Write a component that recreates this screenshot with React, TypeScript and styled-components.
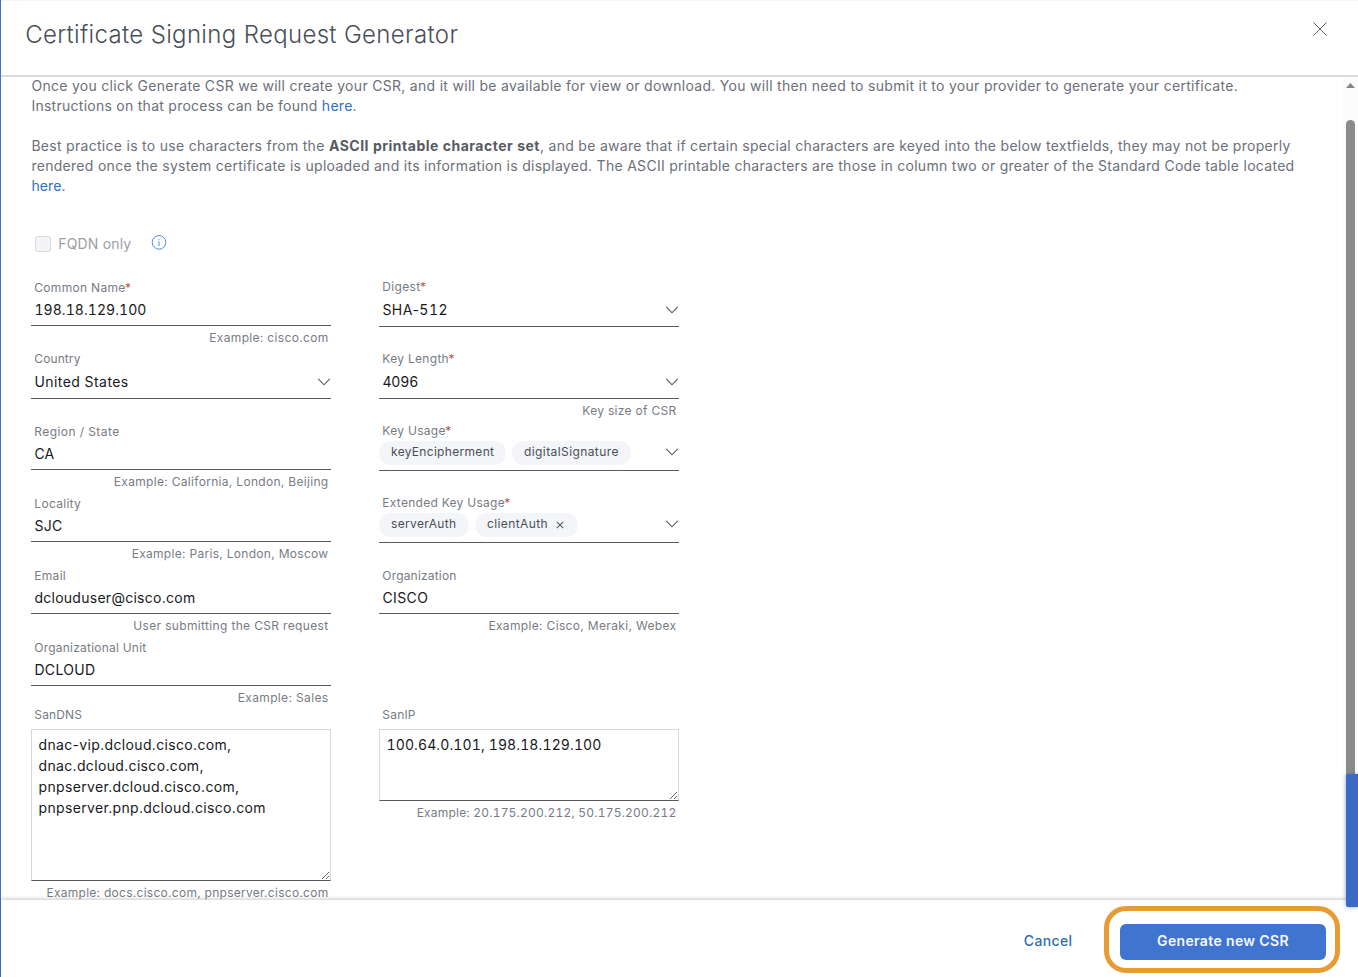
import React from "react";
import styled, { createGlobalStyle } from "styled-components";

const GlobalStyle = createGlobalStyle`
  * { box-sizing: border-box; }
  body {
    margin: 0;
    background: #fff;
    font-family: Inter, "Liberation Sans", sans-serif;
    font-size: 14px;
    letter-spacing: 0.3px;
    color: #6b7079;
    overflow: hidden;
  }
`;

const Modal = styled.div`
  position: relative;
  display: flex;
  flex-direction: column;
  width: 1358px;
  height: 977px;
  border-left: 1px solid #3a74d4;
  background: #fff;
`;

const Header = styled.header`
  display: flex;
  flex: none;
  justify-content: space-between;
  align-items: flex-start;
  height: 77px;
  padding: 20px 31px 0 24.2px;
  border-top: 1px solid #f5f5f6;
  border-bottom: 2px solid #dadbe0;
`;

const Title = styled.h1`
  margin: 0;
  font-size: 24px;
  line-height: 28px;
  font-weight: 300;
  letter-spacing: 0.335px;
  color: #4a4f57;
`;

const CloseButton = styled.button`
  display: flex;
  margin: 1px 0 0;
  padding: 0;
  border: 0;
  background: none;
`;

const Body = styled.div`
  display: flex;
  flex: 1;
  min-height: 0;
`;

const Content = styled.main`
  flex: 1;
  min-width: 0;
  margin-top: -1px;
  padding-left: 30px;
  overflow: hidden;
`;

const Paragraph = styled.p`
  margin: 0 0 20px;
  line-height: 20px;
`;

const Line = styled.span<{ $ls?: number }>`
  display: block;
  padding-left: 0.4px;
  white-space: nowrap;
  letter-spacing: ${(p) => p.$ls ?? 0.3}px;
`;

const Strong = styled.strong`
  font-weight: 700;
  letter-spacing: 0.51px;
  color: #565b63;
`;

const Link = styled.a`
  color: #2a6fd0;
`;

const CheckRow = styled.div`
  display: flex;
  align-items: center;
  height: 20px;
  margin: 37px 0 26px;
  padding-left: 4px;
`;

const CheckBox = styled.span`
  width: 16px;
  height: 16px;
  margin-top: 1px;
  border: 1px solid #d8dade;
  border-radius: 3px;
  background: #f3f4f6;
`;

const CheckLabel = styled.span`
  margin: 0 20px 0 7.3px;
  letter-spacing: 0.16px;
  color: #9a9ea5;
`;

const Form = styled.div`
  display: flex;
  gap: 48px;
`;

const Column = styled.div<{ $shift?: boolean }>`
  width: 300px;
  padding-top: ${(p) => (p.$shift ? 0 : 1)}px;
`;

const FieldBox = styled.div<{ $height: number }>`
  display: flex;
  flex-direction: column;
  height: ${(p) => p.$height}px;
`;

const Label = styled.label<{ $ls?: number }>`
  height: 16px;
  padding-left: 3.3px;
  font-size: 12px;
  line-height: 16px;
  letter-spacing: ${(p) => p.$ls ?? 0.3}px;
  color: #777c84;
`;

const Required = styled.span`
  margin-left: -0.6px;
  color: #b8584a;
`;

const Control = styled.div<{ $height: number }>`
  display: flex;
  flex: none;
  justify-content: space-between;
  height: ${(p) => p.$height}px;
  border-bottom: 1px solid #555a62;
`;

const Value = styled.span<{ $height: number; $ls?: number }>`
  padding-left: 3.4px;
  line-height: ${(p) => p.$height}px;
  letter-spacing: ${(p) => p.$ls ?? 0.3}px;
  color: #17191c;
`;

const Digits = styled.span`
  font-variant-numeric: tabular-nums;
`;

const Helper = styled.div<{ $ls?: number }>`
  padding: 4px 2.5px 0 0;
  text-align: right;
  font-size: 12px;
  line-height: 16px;
  white-space: nowrap;
  letter-spacing: ${(p) => p.$ls ?? 0.35}px;
  color: #777c84;
`;

const ChipRow = styled.div`
  display: flex;
  gap: 6px;
  margin-top: 2px;
`;

const Chip = styled.span<{ $width: number; $ls: number }>`
  display: flex;
  align-items: center;
  gap: 8px;
  width: ${(p) => p.$width}px;
  height: 24px;
  padding: 0 0 3px 12px;
  border-radius: 12px;
  background: #f3f5f8;
  font-size: 12px;
  letter-spacing: ${(p) => p.$ls}px;
  color: #4a4f57;

  svg {
    margin-top: 2px;
  }
`;

const TextBox = styled.div<{ $height: number; $ls?: number }>`
  flex: none;
  height: ${(p) => p.$height}px;
  margin-top: 6px;
  padding: 4px 6.5px;
  border: 1px solid #d6d8db;
  border-bottom-color: #555a62;
  overflow: hidden;
  resize: vertical;
  line-height: 21px;
  white-space: pre;
  letter-spacing: ${(p) => p.$ls ?? 0.34}px;
  color: #17191c;
`;

const ScrollBar = styled.div`
  display: flex;
  flex-direction: column;
  align-items: center;
  width: 15px;
  padding-top: 6px;
  background: #fcfcfc;
`;

const Thumb = styled.div`
  flex: 1;
  width: 9px;
  margin-top: 32px;
  border-radius: 5px 5px 0 0;
  background: #8b8b8b;
`;

const Footer = styled.footer`
  position: relative;
  display: flex;
  flex: none;
  justify-content: flex-end;
  align-items: center;
  height: 77px;
  padding: 3px 18px 0 0;
  background: #fff;
  box-shadow: 0 -1px 4px rgba(0, 0, 0, 0.22);
`;

const CancelButton = styled.button`
  margin: 0 31.5px 0 0;
  padding: 0;
  border: 0;
  background: none;
  font: 500 14px Inter, sans-serif;
  letter-spacing: 0.38px;
  color: #336bb0;
`;

const Highlight = styled.div`
  display: flex;
  align-items: center;
  justify-content: center;
  width: 236px;
  height: 67px;
  margin-top: -1px;
  border: 5px solid #e89a33;
  border-radius: 22px;
`;

const PrimaryButton = styled.button`
  width: 206px;
  height: 36px;
  margin: 4px 0 0 2px;
  padding: 0 0 2px;
  border: 0;
  border-radius: 6px;
  background: #3f74d1;
  font: 600 14px Inter, sans-serif;
  letter-spacing: 0.36px;
  color: #f6f9ff;
`;

const SideTab = styled.div`
  position: absolute;
  top: 774px;
  right: 0;
  width: 12px;
  height: 133px;
  border-radius: 2px 0 0 2px;
  background: #3b69c4;
  box-shadow: 0 0 4px rgba(59, 105, 196, 0.6);
`;

const ChevronSvg = styled.svg<{ $top: number }>`
  flex: none;
  margin-top: ${(p) => p.$top}px;
`;

const Chevron = ({ top }: { top: number }) => (
  <ChevronSvg $top={top} width="14" height="10" viewBox="0 0 14 10" fill="none" stroke="#555a62" strokeWidth="1.1">
    <path d="M1.3 1.8 7 7.8l5.7-6" />
  </ChevronSvg>
);

type FieldProps = {
  label: string;
  labelLs?: number;
  required?: boolean;
  height: number;
  control?: number;
  line?: number;
  value?: React.ReactNode;
  valueLs?: number;
  chevron?: number;
  helper?: string;
  helperLs?: number;
  children?: React.ReactNode;
};

const Field = ({
  label, labelLs, required, height, control = 30, line = 28, value, valueLs, chevron, helper, helperLs, children,
}: FieldProps) => (
  <FieldBox $height={height}>
    <Label $ls={labelLs}>
      {label}
      {required && <Required>*</Required>}
    </Label>
    <Control $height={control}>
      {value ? <Value $height={line} $ls={valueLs}>{value}</Value> : children}
      {chevron !== undefined && <Chevron top={chevron} />}
    </Control>
    {helper && <Helper $ls={helperLs}>{helper}</Helper>}
  </FieldBox>
);

export default function App() {
  return (
    <Modal>
      <GlobalStyle />
      <Header>
        <Title>Certificate Signing Request Generator</Title>
        <CloseButton aria-label="Close">
          <svg width="14" height="14" viewBox="0 0 14 14" stroke="#62666d" strokeWidth="1">
            <path d="M.4.4l13.2 13.2M13.6.4.4 13.6" />
          </svg>
        </CloseButton>
      </Header>
      <Body>
        <Content>
          <Paragraph>
            <Line $ls={0.295}>
              Once you click Generate CSR we will create your CSR, and it will be available for view or download. You
              will then need to submit it to your provider to generate your certificate.
            </Line>
            <Line $ls={0.265}>
              Instructions on that process can be found <Link>here</Link>.
            </Line>
          </Paragraph>
          <Paragraph>
            <Line $ls={0.295}>
              Best practice is to use characters from the <Strong>ASCII printable character set</Strong>, and be aware
              that if certain special characters are keyed into the below textfields, they may not be properly
            </Line>
            <Line $ls={0.289}>
              rendered once the system certificate is uploaded and its information is displayed. The ASCII printable
              characters are those in column two or greater of the Standard Code table located
            </Line>
            <Line $ls={0.1}>
              <Link>here</Link>.
            </Line>
          </Paragraph>
          <CheckRow>
            <CheckBox />
            <CheckLabel>FQDN only</CheckLabel>
            <svg width="16" height="16" viewBox="0 0 16 16" fill="none" stroke="#4f8fdc" strokeWidth="1">
              <circle cx="8" cy="7.4" r="6.8" />
              <path d="M8 6.4v4.6M8 4v1.2" />
            </svg>
          </CheckRow>
          <Form>
            <Column>
              <Field label="Common Name" required height={71} value={<Digits>198.18.129.100</Digits>} valueLs={0.07} helper="Example: cisco.com" helperLs={0.33} />
              <Field label="Country" labelLs={0.1} height={73} control={32} line={30} value="United States" valueLs={0.43} chevron={10} />
              <Field label="Region / State" labelLs={0.42} height={72} value="CA" valueLs={0.1} helper="Example: California, London, Beijing" helperLs={0.31} />
              <Field label="Locality" height={72} value="SJC" helper="Example: Paris, London, Moscow" helperLs={0.3} />
              <Field label="Email" height={72} value="dclouduser@cisco.com" valueLs={0.27} helper="User submitting the CSR request" helperLs={0.34} />
              <Field label="Organizational Unit" labelLs={0.22} height={67} value="DCLOUD" valueLs={0.35} helper="Example: Sales" helperLs={0.36} />
              <Label $ls={0.15} as="div">SanDNS</Label>
              <TextBox $height={152}>
                {"dnac-vip.dcloud.cisco.com,\ndnac.dcloud.cisco.com,\npnpserver.dcloud.cisco.com,\npnpserver.pnp.dcloud.cisco.com"}
              </TextBox>
              <Helper $ls={0.275}>Example: docs.cisco.com, pnpserver.cisco.com</Helper>
            </Column>
            <Column $shift>
              <Field label="Digest" labelLs={0.35} required height={72} control={32} line={30} value={<>SHA-<Digits>512</Digits></>} valueLs={0.48} chevron={10} />
              <Field label="Key Length" required height={72} control={32} line={30} value={<Digits>4096</Digits>} valueLs={-0.1} chevron={10} helper="Key size of CSR" helperLs={0.3} />
              <Field label="Key Usage" required height={72} control={32} chevron={8}>
                <ChipRow>
                  <Chip $width={127} $ls={0.31}>keyEncipherment</Chip>
                  <Chip $width={119} $ls={0.41}>digitalSignature</Chip>
                </ChipRow>
              </Field>
              <Field label="Extended Key Usage" labelLs={0.27} required height={73} control={32} chevron={8}>
                <ChipRow>
                  <Chip $width={90} $ls={0.35}>serverAuth</Chip>
                  <Chip $width={103} $ls={0.39}>
                    clientAuth
                    <svg width="8" height="8" viewBox="0 0 8 8" stroke="#555a62" strokeWidth="1.1">
                      <path d="M.8.8l6.4 6.4M7.2.8.8 7.2" />
                    </svg>
                  </Chip>
                </ChipRow>
              </Field>
              <Field label="Organization" labelLs={0.18} height={139} value="CISCO" valueLs={0.4} helper="Example: Cisco, Meraki, Webex" helperLs={0.34} />
              <Label $ls={0.2} as="div">SanIP</Label>
              <TextBox $height={72} $ls={0.12}><Digits>100.64.0.101, 198.18.129.100</Digits></TextBox>
              <Helper $ls={0.21}><Digits>Example: 20.175.200.212, 50.175.200.212</Digits></Helper>
            </Column>
          </Form>
        </Content>
        <ScrollBar>
          <svg width="9" height="5" viewBox="0 0 9 5" fill="#858585">
            <path d="M0 5 4.5 0 9 5z" />
          </svg>
          <Thumb />
        </ScrollBar>
      </Body>
      <Footer>
        <CancelButton>Cancel</CancelButton>
        <Highlight>
          <PrimaryButton>Generate new CSR</PrimaryButton>
        </Highlight>
      </Footer>
      <SideTab />
    </Modal>
  );
}
